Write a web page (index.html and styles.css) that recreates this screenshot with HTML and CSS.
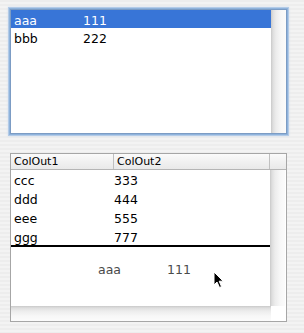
FILE: index.html
```
<!DOCTYPE html>
<html>
<head>
<meta charset="utf-8">
<link rel="stylesheet" href="styles.css">
</head>
<body>
<div class="page">
  <div class="list">
    <div class="list-rows">
      <div class="row sel"><span class="c1">aaa</span><span class="c2">111</span></div>
      <div class="row"><span class="c1">bbb</span><span class="c2">222</span></div>
    </div>
    <div class="vscroll"></div>
  </div>

  <div class="table">
    <div class="thead">
      <div class="th th1">ColOut1</div>
      <div class="th th2">ColOut2</div>
      <div class="th corner"></div>
    </div>
    <div class="tmain">
      <div class="tbody">
        <div class="trow"><span class="t1">ccc</span><span class="t2">333</span></div>
        <div class="trow"><span class="t1">ddd</span><span class="t2">444</span></div>
        <div class="trow"><span class="t1">eee</span><span class="t2">555</span></div>
        <div class="trow"><span class="t1">ggg</span><span class="t2">777</span></div>
        <div class="drop-line"></div>
        <div class="ghost"><span class="c1">aaa</span><span class="c2">111</span></div>
        <svg class="cursor" width="12" height="18" viewBox="0 0 12 18"><path d="M1 1 L1 14 L4 11 L6.5 16.5 L8.5 15.6 L6.2 10.2 L10.2 10.2 Z" fill="#000" stroke="#fff" stroke-width="1" stroke-linejoin="round"/></svg>
      </div>
      <div class="vscroll"></div>
    </div>
    <div class="hrow">
      <div class="hscroll"></div>
      <div class="hcorner"></div>
    </div>
  </div>
</div>
</body>
</html>
```
FILE: styles.css
```
html, body {
  margin: 0;
  padding: 0;
}
body {
  width: 304px;
  height: 333px;
  background: repeating-linear-gradient(to bottom, #ededed 0, #ededed 2px, #f3f3f3 2px, #f3f3f3 4px);
  font-family: "DejaVu Sans", sans-serif;
  font-size: 12.5px;
  color: #000;
  overflow: hidden;
}
.page {
  padding: 9px 0 0 10px;
}
.list {
  box-sizing: border-box;
  width: 277px;
  height: 125px;
  border: 1px solid #7c9cc4;
  box-shadow: 0 0 0 1px #8fb3dc, 0 0 0 2px #b3cbe7, 0 0 2px 2px #cfdef0;
  background: #fff;
  display: flex;
}
.list-rows {
  width: 260px;
}
.row {
  height: 18px;
  line-height: 21px;
  display: flex;
}
.row.sel {
  background: #3875d7;
  color: #fff;
}
.c1 {
  width: 69px;
  padding-left: 3px;
}
.c2 {
  flex: 1;
}
.vscroll {
  width: 15px;
  background: linear-gradient(to right, #c9c9c9 0, #dedede 2px, #ececec 5px, #f7f7f7 10px, #fbfbfb 100%);
}
.table {
  box-sizing: border-box;
  margin-top: 19px;
  width: 277px;
  height: 169px;
  border: 1px solid #a6a6a6;
  background: #fff;
  display: flex;
  flex-direction: column;
}
.thead {
  height: 15px;
  border-bottom: 1px solid #b5b5b5;
  display: flex;
  background: linear-gradient(to bottom, #fbfbfb 0, #f1f1f1 50%, #e9e9e9 100%);
  font-size: 11px;
  line-height: 16px;
}
.th {
  box-sizing: border-box;
  border-right: 1px solid #c0c0c0;
  padding-left: 3px;
  overflow: hidden;
  white-space: nowrap;
}
.th1 { width: 103px; }
.th2 { width: 156px; }
.corner { width: 15px; border-right: none; }
.tmain {
  height: 136px;
  display: flex;
}
.tbody {
  position: relative;
  width: 259px;
}
.trow {
  height: 19px;
  line-height: 22px;
  display: flex;
}
.t1 {
  width: 100px;
  padding-left: 3px;
}
.t2 {
  flex: 1;
}
.drop-line {
  position: absolute;
  left: 0;
  right: 0;
  top: 75px;
  height: 2px;
  background: #000;
}
.ghost {
  position: absolute;
  left: 84px;
  top: 91px;
  width: 160px;
  height: 18px;
  line-height: 18px;
  display: flex;
  color: #4a4a4a;
}
.cursor {
  position: absolute;
  left: 202px;
  top: 101px;
}
.hrow {
  height: 15px;
  display: flex;
}
.hscroll {
  width: 260px;
  background: linear-gradient(to bottom, #c9c9c9 0, #dedede 2px, #ececec 5px, #f7f7f7 10px, #fbfbfb 100%);
}
.hcorner {
  flex: 1;
  background: #fff;
}
```
